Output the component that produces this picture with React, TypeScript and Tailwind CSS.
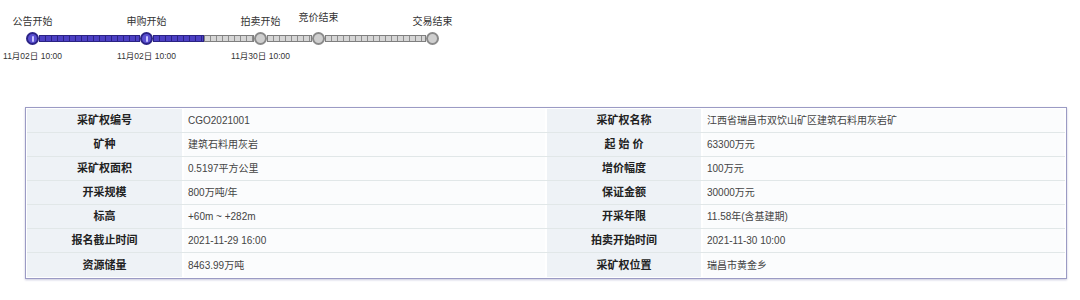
import React from "react";

const font = { fontFamily: '"Liberation Sans", "Noto Sans CJK SC", sans-serif' };

const rows: [string, string, string, string][] = [
  ["采矿权编号", "CGO2021001", "采矿权名称", "江西省瑞昌市双饮山矿区建筑石料用灰岩矿"],
  ["矿种", "建筑石料用灰岩", "起 始 价", "63300万元"],
  ["采矿权面积", "0.5197平方公里", "增价幅度", "100万元"],
  ["开采规模", "800万吨/年", "保证金额", "30000万元"],
  ["标高", "+60m ~ +282m", "开采年限", "11.58年(含基建期)"],
  ["报名截止时间", "2021-11-29 16:00", "拍卖开始时间", "2021-11-30 10:00"],
  ["资源储量", "8463.99万吨", "采矿权位置", "瑞昌市黄金乡"],
];

function Node({ active, label, date, high }: { active: boolean; label: string; date?: string; high?: boolean }) {
  return (
    <div className="relative w-[13px] h-[13px] shrink-0">
      <div
        className={
          active
            ? "w-[13px] h-[13px] rounded-full border-2 border-[#2b2385] bg-[#5a4fd0] flex items-center justify-center"
            : "w-[13px] h-[13px] rounded-full border-2 border-[#8a8a8a] bg-[#cfcfcf]"
        }
      >
        {active && <div className="w-[2px] h-[6px] rounded-full bg-[#c9c4ff]" />}
      </div>
      <div
        className={
          (high ? "top-[-22px] " : "top-[-18px] ") +
          "absolute left-1/2 -translate-x-1/2 whitespace-nowrap text-[10px] text-[#333]"
        }
      >
        {label}
      </div>
      {date && (
        <div className="absolute top-[18px] left-1/2 -translate-x-1/2 whitespace-nowrap text-[8.5px] text-[#333]">
          {date}
        </div>
      )}
    </div>
  );
}

function Seg({ w, purple }: { w: string; purple?: boolean }) {
  return (
    <div
      className={
        w +
        (purple
          ? " h-[7px] border border-[#2b2385] bg-[repeating-linear-gradient(90deg,#4c40c4_0px,#4c40c4_5px,#2b2385_5px,#2b2385_6px)]"
          : " h-[7px] border border-[#7f7f7f] bg-[repeating-linear-gradient(90deg,#d6d6d6_0px,#d6d6d6_5px,#8c8c8c_5px,#8c8c8c_6px)]")
      }
    />
  );
}

export default function App() {
  return (
    <div className="w-[1080px] h-[300px] bg-white overflow-hidden" style={font}>
      <div className="pl-[26px] pt-[32px] h-[107px]">
        <div className="flex items-center">
          <Node active label="公告开始" date="11月02日  10:00" />
          <Seg w="w-[101px]" purple />
          <Node active label="申购开始" date="11月02日  10:00" />
          <div className="flex">
            <Seg w="w-[51px]" purple />
            <Seg w="w-[50px]" />
          </div>
          <Node active={false} label="拍卖开始" date="11月30日  10:00" />
          <Seg w="w-[45px]" />
          <Node active={false} label="竞价结束" high />
          <Seg w="w-[101px]" />
          <Node active={false} label="交易结束" />
        </div>
      </div>
      <div className="ml-[25px] w-[1042px] border border-[#9b9bc4] shadow-[0_1px_2px_rgba(120,120,170,0.4)] p-[1px]">
        {rows.map((r, i) => (
          <div
            key={i}
            className={
              "grid grid-cols-[155px_361px_154px_361px] gap-x-[2px] h-[24px] " +
              (i < rows.length - 1 ? "border-b border-[#e1e7e8]" : "")
            }
          >
            <div className="bg-[#eef2f6] flex items-center justify-center text-[11px] font-bold text-[#222]">{r[0]}</div>
            <div className="bg-[#fbfcfd] flex items-center pl-[4px] text-[10px] text-[#444]">{r[1]}</div>
            <div className="bg-[#eef2f6] flex items-center justify-center text-[11px] font-bold text-[#222]">{r[2]}</div>
            <div className="bg-[#fbfcfd] flex items-center pl-[4px] text-[10px] text-[#444]">{r[3]}</div>
          </div>
        ))}
      </div>
    </div>
  );
}
